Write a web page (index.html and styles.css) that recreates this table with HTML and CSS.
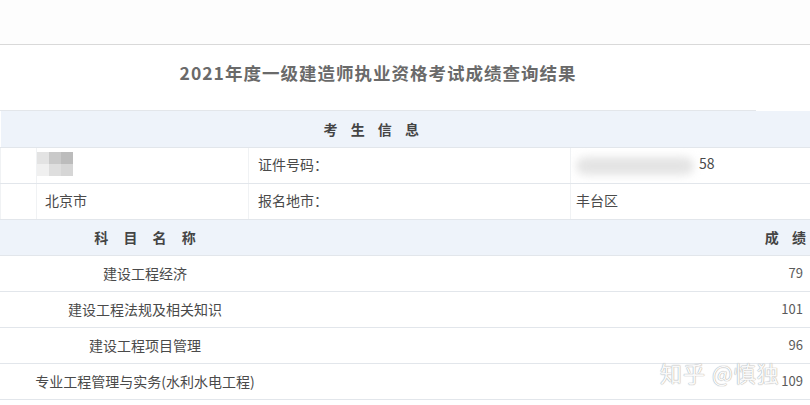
FILE: index.html
```html
<!DOCTYPE html>
<html lang="zh-CN">
<head>
    <meta charset="UTF-8">
    <title>成绩查询结果</title>
    <link rel="stylesheet" href="styles.css">
</head>
<body>
    <div class="page">
        <div class="top-band"></div>
        <div class="title-row">
            <h1>2021年度一级建造师执业资格考试成绩查询结果</h1>
        </div>

        <table class="info">
            <colgroup>
                <col class="c0"><col class="c1"><col class="c2"><col class="c3">
            </colgroup>
            <tr class="head">
                <th colspan="4"><span class="head-text">考 生 信 息</span></th>
            </tr>
            <tr>
                <td></td>
                <td><div class="mosaic"><i></i><i></i><i></i><i></i><i></i><i></i></div></td>
                <td>证件号码：</td>
                <td><span class="smudge"></span>58</td>
            </tr>
            <tr>
                <td></td>
                <td>北京市</td>
                <td>报名地市：</td>
                <td>丰台区</td>
            </tr>
        </table>

        <table class="scores">
            <colgroup>
                <col class="s0"><col class="s1">
            </colgroup>
            <tr class="head">
                <th class="subj">科 目 名 称</th>
                <th class="val">成 绩</th>
            </tr>
            <tr><td class="subj">建设工程经济</td><td class="val">79</td></tr>
            <tr><td class="subj">建设工程法规及相关知识</td><td class="val">101</td></tr>
            <tr><td class="subj">建设工程项目管理</td><td class="val">96</td></tr>
            <tr><td class="subj">专业工程管理与实务(水利水电工程)</td><td class="val">109</td></tr>
        </table>

        <div class="watermark">知乎 @慎独</div>
    </div>
</body>
</html>
```

FILE: styles.css
```css
* {
    margin: 0;
    padding: 0;
    box-sizing: border-box;
}
body {
    font-family: "Noto Sans CJK SC", "Liberation Sans", sans-serif;
    background: #fff;
    color: #4a4a4a;
    font-size: 14px;
    overflow: hidden;
}
.page {
    position: relative;
    width: 840px;
    height: 405px;
}
.top-band {
    height: 45px;
    background: #fdfdfd;
    border-bottom: 1px solid #d9d9d9;
}
.title-row {
    width: 756px;
    height: 66px;
    display: flex;
    align-items: center;
    justify-content: center;
    padding-bottom: 10px;
    border-bottom: 1px solid #e3e6ea;
}
.title-row h1 {
    font-size: 17.5px;
    font-weight: bold;
    color: #6a6a6a;
    letter-spacing: 1px;
}
table {
    width: 840px;
    border-collapse: collapse;
    table-layout: fixed;
}
.info .c0 { width: 36px; }
.info .c1 { width: 212px; }
.info .c2 { width: 322px; }
.info .c3 { width: 270px; }
tr {
    height: 36px;
}
td, th {
    border-bottom: 1px solid #e2e6eb;
    vertical-align: middle;
    text-align: left;
    white-space: nowrap;
    overflow: hidden;
}
.info td {
    border-left: 1px solid #f0f2f4;
    padding-bottom: 2px;
}
.info td:nth-child(2) { padding-left: 8px; }
.info td:nth-child(3) { padding-left: 9px; }
.info td:nth-child(4) { padding-left: 5px; }
.head {
    background: #eef3fa;
}
.head th {
    font-size: 14px;
    font-weight: bold;
    color: #444;
}
.info .head th {
    padding-left: 323px;
}
.head-text {
    letter-spacing: 5px;
}
.mosaic {
    display: grid;
    grid-template-columns: repeat(3, 12px);
    grid-template-rows: repeat(2, 12px);
    margin-left: -8px;
    filter: blur(0.6px);
}
.mosaic i:nth-child(1) { background: #e3e3e3; }
.mosaic i:nth-child(2) { background: #c9c9c9; }
.mosaic i:nth-child(3) { background: #bcbcbc; }
.mosaic i:nth-child(4) { background: #f0f0f0; }
.mosaic i:nth-child(5) { background: #dedede; }
.mosaic i:nth-child(6) { background: #d6d6d6; }
.smudge {
    display: inline-block;
    vertical-align: middle;
    width: 118px;
    height: 18px;
    margin-right: 5px;
    background: #e4e4e4;
    border-radius: 9px;
    filter: blur(4px);
}
.scores .s0 { width: 290px; }
.scores .s1 { width: 550px; }
.scores td {
    padding-bottom: 2px;
}
.scores .subj {
    text-align: center;
}
.scores .head .subj {
    letter-spacing: 6px;
    padding-left: 6px;
}
.scores .val {
    text-align: right;
    padding-right: 37px;
    color: #5a5a5a;
    font-size: 13px;
}
.scores .head .val {
    letter-spacing: 5px;
    padding-right: 29px;
    font-size: 14px;
    color: #444;
}
.watermark {
    position: absolute;
    left: 660px;
    top: 356px;
    font-size: 22px;
    color: rgba(255, 255, 255, 0.94);
    text-shadow: 0 0 1px #aaa, 0 0 1px #aaa;
    letter-spacing: 1px;
}
```
